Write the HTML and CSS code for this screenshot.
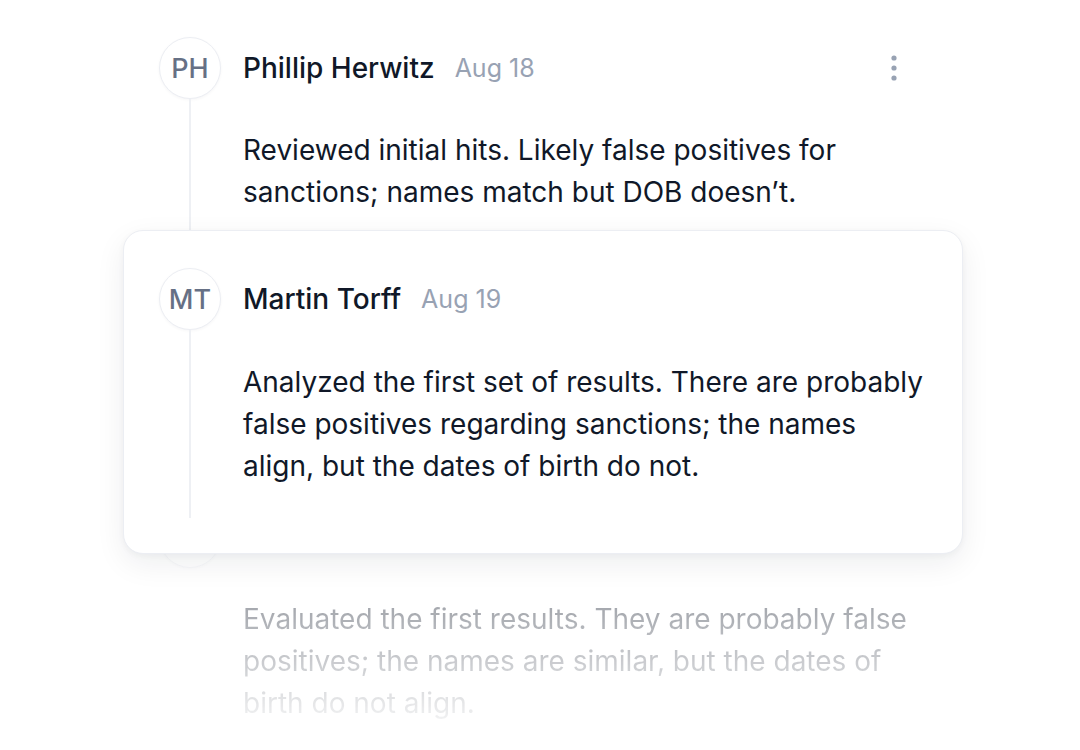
FILE: index.html
```html
<!DOCTYPE html>
<html lang="en">
<head>
    <meta charset="UTF-8">
    <title>Case notes</title>
    <link rel="stylesheet" href="styles.css">
</head>
<body>
<div class="thread">
    <div class="comment">
        <div class="rail">
            <div class="avatar">PH</div>
            <div class="line"></div>
        </div>
        <div class="content">
            <div class="head">
                <span class="name">Phillip Herwitz</span>
                <span class="date">Aug 18</span>
                <button class="more" aria-label="More">
                    <svg width="6" height="26" viewBox="0 0 6 26">
                        <circle cx="3" cy="3" r="2.6"/>
                        <circle cx="3" cy="13" r="2.6"/>
                        <circle cx="3" cy="23" r="2.6"/>
                    </svg>
                </button>
            </div>
            <p class="body">Reviewed initial hits. Likely false positives for sanctions; names match but DOB doesn’t.</p>
        </div>
    </div>

    <div class="comment raised">
        <div class="rail">
            <div class="avatar">MT</div>
            <div class="line"></div>
        </div>
        <div class="content">
            <div class="head">
                <span class="name">Martin Torff</span>
                <span class="date">Aug 19</span>
            </div>
            <p class="body">Analyzed the first set of results. There are probably false positives regarding sanctions; the names align, but the dates of birth do not.</p>
        </div>
    </div>

    <div class="comment faded">
        <div class="rail">
            <div class="avatar">AK</div>
        </div>
        <div class="content">
            <div class="head">
                <span class="name">Anna Kowalski</span>
                <span class="date">Aug 20</span>
            </div>
            <p class="body">Evaluated the first results. They are probably false positives; the names are similar, but the dates of birth do not align.</p>
        </div>
    </div>
</div>
</body>
</html>
```

FILE: styles.css
```css
body {
    margin: 0;
    background: #ffffff;
    font-family: Inter, "Noto Sans", sans-serif;
    color: #101828;
    overflow: hidden;
}

.thread {
    width: 840px;
    margin-left: 123px;
}

.comment {
    display: grid;
    grid-template-columns: 62px 1fr;
    column-gap: 22px;
    padding: 37px 36px 0;
}

.rail {
    display: flex;
    flex-direction: column;
    align-items: center;
}
.avatar {
    width: 60px;
    height: 60px;
    flex: none;
    border: 1px solid #eceef3;
    border-radius: 50%;
    background: #fff;
    display: flex;
    align-items: center;
    justify-content: center;
    font-size: 27px;
    font-weight: 500;
    color: #667085;
    box-shadow: 0 1px 3px rgba(16, 24, 40, 0.04);
}
.line {
    flex: 1;
    width: 2px;
    background: #eef0f4;
}

.head {
    height: 62px;
    display: flex;
    align-items: center;
    gap: 20px;
}
.name {
    font-size: 28px;
    font-weight: 500;
    color: #101828;
}
.date {
    font-size: 25px;
    color: #98a2b3;
}
.more {
    margin-left: auto;
    margin-right: 30px;
    border: 0;
    padding: 0;
    background: none;
    display: flex;
    fill: #98a2b3;
}

.body {
    margin: 30px 0 17px;
    font-size: 28px;
    line-height: 42px;
    color: #101828;
}

/* the open note sits on top of the thread */
.raised {
    position: relative;
    z-index: 1;
    background: #fff;
    border: 1px solid #eceef3;
    border-radius: 20px;
    box-shadow: 0 10px 30px rgba(16, 24, 40, 0.07), 0 2px 6px rgba(16, 24, 40, 0.04);
    padding: 37px 36px 35px 35px;
    margin-bottom: -85px;
}
.raised .body {
    margin: 31px 0;
}

.faded {
    -webkit-mask-image: linear-gradient(to bottom, rgba(0,0,0,0.42) 45%, rgba(0,0,0,0.03) 96%);
    mask-image: linear-gradient(to bottom, rgba(0,0,0,0.42) 45%, rgba(0,0,0,0.03) 96%);
}
```
